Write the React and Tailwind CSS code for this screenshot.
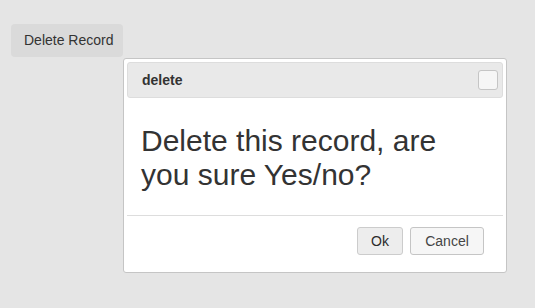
export default function App() {
  return (
    <div
      className="relative w-[535px] h-[308px] bg-[#e5e5e5] overflow-hidden text-[#333333]"
      style={{ fontFamily: '"Liberation Sans", Arial, sans-serif' }}
    >
      <div className="pt-[24px] pl-[11px]">
        <button className="flex items-center w-[112px] h-[33px] rounded-[4px] bg-[#dadada] pl-[13px] text-[14px] text-[#333333]">
          Delete Record
        </button>
      </div>

      <div className="absolute left-[123px] top-[58px] w-[384px] h-[215px] border border-[#c5c5c5] rounded-[3px] bg-white p-[3px] flex flex-col">
        <div className="flex items-center justify-between h-[36px] border border-[#dddddd] bg-[#e9e9e9] rounded-[3px] pl-[14px] pr-[4px]">
          <span className="text-[14px] font-bold text-[#333333] leading-[16px]">delete</span>
          <span className="block w-[20px] h-[20px] border border-[#c5c5c5] bg-[#f6f6f6] rounded-[3px]"></span>
        </div>
        <div className="pt-[26px] pl-[14px] pb-[23px] text-[30px] leading-[34px] text-[#333333]">
          Delete this record, are
          <br />
          you sure Yes/no?
        </div>
        <div className="flex-1 border-t border-[#dddddd] flex justify-end items-start pt-[11px] pr-[19px] gap-[7px]">
          <button className="flex items-center justify-center w-[46px] h-[28px] border border-[#cccccc] bg-[#ededed] rounded-[3px] text-[14px] text-[#2b2b2b]">
            Ok
          </button>
          <button className="flex items-center justify-center w-[74px] h-[28px] border border-[#c5c5c5] bg-[#f6f6f6] rounded-[3px] text-[14px] text-[#454545]">
            Cancel
          </button>
        </div>
      </div>
    </div>
  );
}
